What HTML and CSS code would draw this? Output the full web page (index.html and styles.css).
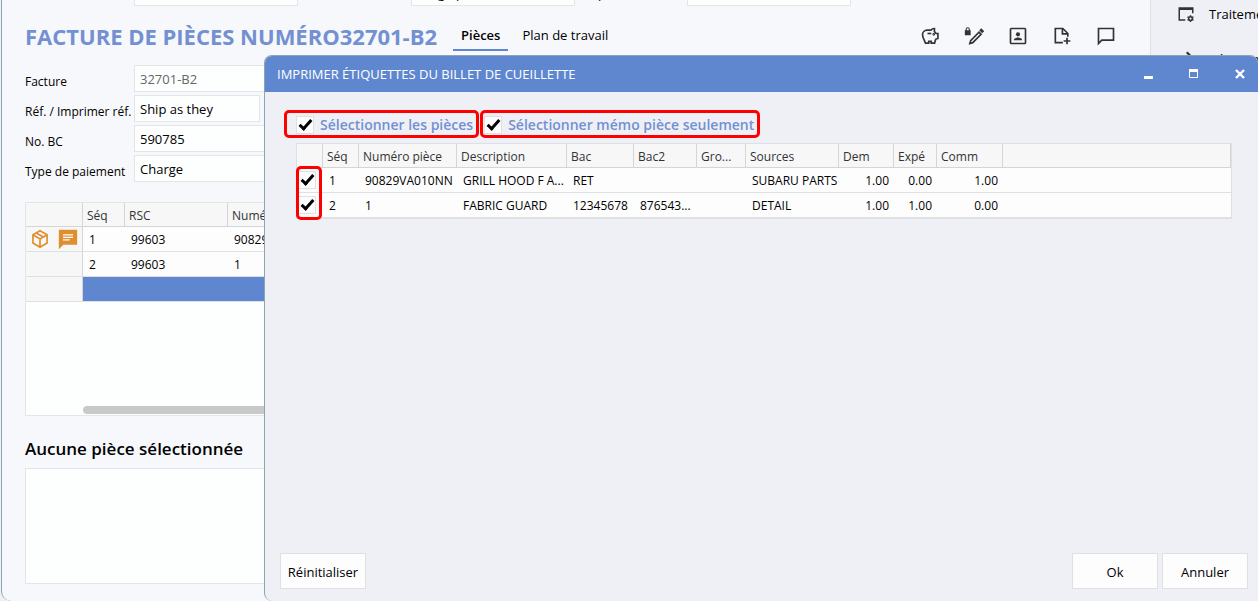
FILE: index.html
```html
<!DOCTYPE html>
<html lang="fr">
<head>
  <meta charset="UTF-8" />
  <meta name="viewport" content="width=device-width, initial-scale=1.0"/>
  <title>Facture de pièces</title>
  <link rel="stylesheet" href="styles.css">
</head>
<body>
  <div class="window">
    <main class="main">
      <div class="top-fields">
        <input type="text" class="field" aria-label="Client" />
        <input type="text" class="field second" value="Cargo p" aria-label="Transport" />
        <label for="exp">Exp.</label>
        <input type="text" class="field" id="exp" />
      </div>

      <header class="page-header">
        <h1>FACTURE DE PIÈCES NUMÉRO32701-B2</h1>
        <nav class="tabs">
          <a href="#" class="active">Pièces</a>
          <a href="#">Plan de travail</a>
        </nav>
        <div class="toolbar">
          <button aria-label="Dépôt">
            <svg viewBox="0 0 24 24"><path d="M6.5 20.5C5.500 17.500 3 14 3 10.500A5.500 5.500 0 0 1 8.500 5H13c1-1.400 2.500-2 4.300-2v3.700L19.300 9H21.500v6l-2.700 1-1.300 4.500h-4V18.500h-3v2z"/><path d="M9 9h4.500"/><circle cx="16.500" cy="10" r=".6"/></svg>
          </button>
          <button aria-label="Modifier">
            <svg viewBox="0 0 24 24"><path d="M7 21l1-3.500L18 7.500l2.500 2.500-10 10z"/><path d="M19.500 4l3.500 3.500" stroke-width="3.500"/><path class="solid" fill-rule="evenodd" d="M1 5h1V4a2.500 2.500 0 0 1 5 0v1h1v6H1zM3.300 5h2.400V4a1.200 1.200 0 0 0-2.400 0z"/></svg>
          </button>
          <button aria-label="Contact">
            <svg viewBox="0 0 24 24"><rect x="3" y="3" width="18" height="18" rx="1"/><circle class="solid" cx="12" cy="10" r="2.500"/><path class="solid" d="M7 17c0-2 2.500-3.200 5-3.200s5 1.200 5 3.200z"/></svg>
          </button>
          <button aria-label="Ajouter un document">
            <svg viewBox="0 0 24 24"><path d="M13 20H4V3h9l6 6v4"/><path d="M12.500 3v6.500H19M18 14v8M14 18h8"/></svg>
          </button>
          <button aria-label="Commentaire">
            <svg viewBox="0 0 24 24"><path d="M3 21V3h18v14H7z"/></svg>
          </button>
        </div>
      </header>

      <form class="form">
        <label for="facture">Facture</label>
        <input type="text" class="field muted" id="facture" value="32701-B2" />
        <label for="ref">Réf. / Imprimer réf.</label>
        <input type="text" class="field short" id="ref" value="Ship as they" />
        <label for="bc">No. BC</label>
        <input type="text" class="field" id="bc" value="590785" />
        <label for="paiement">Type de paiement</label>
        <input type="text" class="field" id="paiement" value="Charge" />
      </form>

      <div class="parts">
        <table class="grid">
          <colgroup><col class="w-icons"><col class="w-seq"><col class="w-rsc"><col></colgroup>
          <thead>
            <tr><th></th><th>Séq</th><th>RSC</th><th>Numéro pièce</th></tr>
          </thead>
          <tbody>
            <tr>
              <td class="icons">
                <svg viewBox="0 0 24 24" class="box"><path d="M12 2l8.500 4.800v10L12 22l-8.500-5.200v-10zM3.500 7L12 12l8.500-5M12 12v10M7.500 4.800L16 9.500"/></svg>
                <svg viewBox="0 0 24 24" class="note"><path d="M2 2h20v16H6l-4 4z"/><path class="lines" d="M6 7h12M6 10h12M6 13h8"/></svg>
              </td>
              <td>1</td><td>99603</td><td>90829VA010NN</td>
            </tr>
            <tr><td class="icons"></td><td>2</td><td>99603</td><td>1</td></tr>
            <tr class="selected"><td class="icons"></td><td></td><td></td><td></td></tr>
          </tbody>
        </table>
        <div class="scrollbar"></div>
      </div>

      <h2>Aucune pièce sélectionnée</h2>
      <div class="detail"></div>
    </main>

    <aside class="sidebar">
      <a href="#">
        <svg viewBox="0 0 24 24"><path d="M11 20H3V4h18v7M3 5.500h18"/><circle cx="18" cy="18" r="2.500"/><path d="M18 13.500v2M18 20.500v2M14 15.800l2 1M20 19.200l2 1M14 20.200l2-1M20 16.800l2-1"/></svg>
        Traitement
      </a>
      <a href="#">
        <svg viewBox="0 0 24 24"><path d="M13 3l7 7L8 21" stroke-width="3"/></svg>
        Révision
      </a>
    </aside>
  </div>

  <div class="modal" role="dialog" aria-labelledby="modal-title">
    <div class="modal-header">
      <span id="modal-title">IMPRIMER ÉTIQUETTES DU BILLET DE CUEILLETTE</span>
      <div class="window-buttons">
        <button aria-label="Réduire"><svg viewBox="0 0 12 12"><path d="M2 9.500h9" stroke-width="3"/></svg></button>
        <button aria-label="Agrandir"><svg viewBox="0 0 12 12"><path d="M1 2.500h9" stroke-width="3"/><path d="M1.500 2v7.500h8V2" stroke-width="1"/></svg></button>
        <button aria-label="Fermer"><svg viewBox="0 0 12 12"><path d="M2 2l8 8M10 2l-8 8" stroke-width="2.400"/></svg></button>
      </div>
    </div>

    <div class="modal-body">
      <div class="options">
        <label class="option"><input type="checkbox" checked /> Sélectionner les pièces</label>
        <label class="option"><input type="checkbox" checked /> Sélectionner mémo pièce seulement</label>
      </div>

      <div class="labels">
        <table class="grid">
          <colgroup>
            <col class="w-check"><col class="w-num"><col class="w-part"><col class="w-desc"><col class="w-bac"><col class="w-bac2">
            <col class="w-group"><col class="w-source"><col class="w-dem"><col class="w-exp"><col class="w-comm"><col>
          </colgroup>
          <thead>
            <tr>
              <th></th><th>Séq</th><th>Numéro pièce</th><th>Description</th><th>Bac</th><th>Bac2</th>
              <th>Gro...</th><th>Sources</th><th>Dem</th><th>Expé</th><th>Comm</th><th></th>
            </tr>
          </thead>
          <tbody>
            <tr>
              <td class="check"><input type="checkbox" checked aria-label="Ligne 1" /></td>
              <td>1</td><td>90829VA010NN</td><td>GRILL HOOD F A...</td><td>RET</td><td></td>
              <td></td><td>SUBARU PARTS</td><td class="num">1.00</td><td class="num">0.00</td><td class="num">1.00</td><td></td>
            </tr>
            <tr>
              <td class="check"><input type="checkbox" checked aria-label="Ligne 2" /></td>
              <td>2</td><td>1</td><td>FABRIC GUARD</td><td>12345678</td><td>876543...</td>
              <td></td><td>DETAIL</td><td class="num">1.00</td><td class="num">1.00</td><td class="num">0.00</td><td></td>
            </tr>
          </tbody>
        </table>
      </div>
    </div>

    <div class="modal-footer">
      <button class="btn reset">Réinitialiser</button>
      <button class="btn">Ok</button>
      <button class="btn">Annuler</button>
    </div>
  </div>
</body>
</html>
```
FILE: styles.css
```css
*, *::before, *::after {
  box-sizing: border-box;
}

body {
  margin: 0;
  height: 100vh;
  position: relative;
  overflow: hidden;
  background: #f0f1f5;
  color: #000;
  font-family: 'Open Sans', 'Noto Sans', sans-serif;
  font-size: 12px;
  line-height: 16px;
}

h1, h2 {
  margin: 0;
}

a {
  color: inherit;
  text-decoration: none;
}

button, input {
  font: inherit;
  color: inherit;
}

svg {
  fill: none;
  stroke: #333;
  stroke-width: 2;
}

.solid {
  fill: #333;
  stroke: none;
}

.window {
  display: flex;
  height: 100%;
  margin-left: 1px;
  border-left: 1px solid #8fa3b2;
  border-bottom-left-radius: 10px;
  background: #f7f8fb;
}

.main {
  flex: 1;
  min-width: 0;
  padding-left: 23px;
  overflow: hidden;
}

.field {
  width: 164px;
  height: 27px;
  padding: 0 5px;
  border: 1px solid #e4e5e8;
  background: #fdfefe;
  font-size: 13px;
}

.top-fields {
  display: flex;
  align-items: center;
  margin: -21px 0 0 109px;
  font-size: 13px;
}

.top-fields .second {
  margin: 0 9px 0 113px;
}

.top-fields label {
  width: 103px;
}

.page-header {
  display: flex;
  align-items: center;
  height: 59px;
}

h1 {
  color: #7290d2;
  font-size: 22px;
  line-height: 32px;
  white-space: nowrap;
}

.tabs {
  display: flex;
  gap: 6px;
  margin-left: 16px;
  font-size: 13px;
}

.tabs a {
  padding: 7px 8px 6px;
  border-bottom: 2px solid transparent;
  white-space: nowrap;
}

.tabs .active {
  border-color: #5f87cf;
  font-weight: 600;
}

.toolbar {
  display: flex;
  gap: 24px;
  margin: 0 34px 0 auto;
}

.toolbar button {
  width: 20px;
  height: 20px;
  padding: 0;
  border: 0;
  background: none;
}

.toolbar svg {
  display: block;
}

.form {
  display: grid;
  grid-template-columns: 109px 1fr;
  grid-auto-rows: 27px;
  row-gap: 3px;
}

.form label {
  padding-top: 9px;
  white-space: nowrap;
}

.form .muted {
  color: #666;
}

.form .short {
  width: 126px;
}

.grid {
  width: 100%;
  border-collapse: separate;
  border-spacing: 0;
  table-layout: fixed;
}

.grid th {
  height: 24px;
  padding: 2px 4px 0;
  border-right: 1px solid #d4d5d7;
  border-bottom: 1px solid #d4d5d7;
  background: #f7f7f8;
  color: #333;
  font-weight: 400;
  text-align: left;
  white-space: nowrap;
  overflow: hidden;
}

.grid td {
  height: 25px;
  padding: 1px 4px 0 6px;
  border-bottom: 1px solid #dfe0e2;
  background: #fdfdfd;
  white-space: nowrap;
  overflow: hidden;
}

.grid .num {
  padding-right: 5px;
  text-align: right;
}

.parts {
  display: flex;
  flex-direction: column;
  justify-content: space-between;
  height: 214px;
  margin-top: 20px;
  border: 1px solid #e4e5e8;
  background: #fdfefe;
}

.parts .icons {
  padding: 0 4px;
  border-right: 1px solid #d4d5d7;
  background: #f7f7f8;
}

.parts .selected td:not(.icons) {
  background: #5f87cf;
}

.icons svg {
  width: 20px;
  height: 20px;
  vertical-align: middle;
  stroke: #e08f30;
}

.icons .note {
  margin-left: 5px;
  fill: #e08f30;
}

.icons .lines {
  stroke: #fff;
  stroke-width: 1.5;
}

.w-icons { width: 57px; }
.w-seq { width: 42px; }
.w-rsc { width: 103px; }

.scrollbar {
  height: 8px;
  margin: 0 0 1px 57px;
  border-radius: 4px;
  background: #c9c9c9;
}

h2 {
  margin: 21px 0 7px;
  font-size: 17px;
  font-weight: 600;
  line-height: 24px;
}

.detail {
  height: 116px;
  border: 1px solid #e4e5e8;
  background: #fdfefe;
}

.sidebar {
  width: 108px;
  padding: 4px 0 0 26px;
  border-left: 1px solid #dfe0e4;
  background: #eff0f5;
  overflow: hidden;
}

.sidebar a {
  display: flex;
  align-items: center;
  gap: 14px;
  height: 20px;
  margin-bottom: 25px;
  font-size: 13px;
}

.sidebar svg {
  flex: none;
  width: 18px;
}

.modal {
  position: absolute;
  inset: 55px 0 0 264px;
  display: flex;
  flex-direction: column;
  border: 1px solid #8fa3b2;
  border-width: 1px 0 0 1px;
  border-radius: 8px 8px 0 8px;
  background: #eff0f5;
  overflow: hidden;
}

.modal-header {
  display: flex;
  align-items: center;
  justify-content: space-between;
  height: 36px;
  padding: 0 12px;
  background: #5f87cf;
  color: #fff;
  font-size: 13px;
}

.window-buttons {
  display: flex;
  gap: 34px;
}

.window-buttons button {
  width: 12px;
  height: 12px;
  padding: 0;
  border: 0;
  background: none;
}

.window-buttons svg {
  display: block;
  stroke: #fff;
}

.modal-body {
  flex: 1;
  padding: 18px 26px 0 19px;
}

.options {
  display: flex;
  gap: 1px;
}

.option {
  display: flex;
  align-items: center;
  gap: 6px;
  height: 28px;
  padding: 2px 3px 0 9px;
  border: 3px solid #f00;
  border-radius: 5px;
  color: #7290d2;
  font-size: 14px;
  font-weight: 600;
  white-space: nowrap;
}

.option + .option {
  padding-left: 1px;
}

input[type="checkbox"] {
  appearance: none;
  flex: none;
  width: 18px;
  height: 18px;
  margin: 0;
  border: 1px solid #dfe0e4;
  background: #fdfdfd;
}

/* coche */
input[type="checkbox"]:checked::before {
  content: "";
  display: block;
  width: 13px;
  height: 7px;
  margin: 3px 0 0 2px;
  border: solid #000;
  border-width: 0 0 3px 3px;
  transform: rotate(-48deg);
}

.labels {
  position: relative;
  margin: 5px 0 0 12px;
  border: 1px solid #dfe0e4;
}

/* cadre rouge autour des cases */
.labels::after {
  content: "";
  position: absolute;
  top: 22px;
  left: -1px;
  width: 26px;
  height: 54px;
  border: 3px solid #f00;
  border-radius: 5px;
  pointer-events: none;
}

.labels .check {
  padding: 0 0 0 1px;
}

.check input {
  display: block;
}

.w-check { width: 26px; }
.w-num { width: 36px; }
.w-part { width: 98px; }
.w-desc { width: 110px; }
.w-bac { width: 67px; }
.w-bac2 { width: 63px; }
.w-group { width: 49px; }
.w-source { width: 93px; }
.w-dem { width: 55px; }
.w-exp { width: 43px; }
.w-comm { width: 66px; }

.modal-footer {
  display: flex;
  gap: 4px;
  padding: 0 10px 12px 15px;
}

.btn {
  width: 86px;
  height: 36px;
  padding: 2px 0 0;
  border: 1px solid #dfe0e4;
  background: #fdfdfd;
  font-size: 13px;
}

.reset {
  margin-right: auto;
}
```
